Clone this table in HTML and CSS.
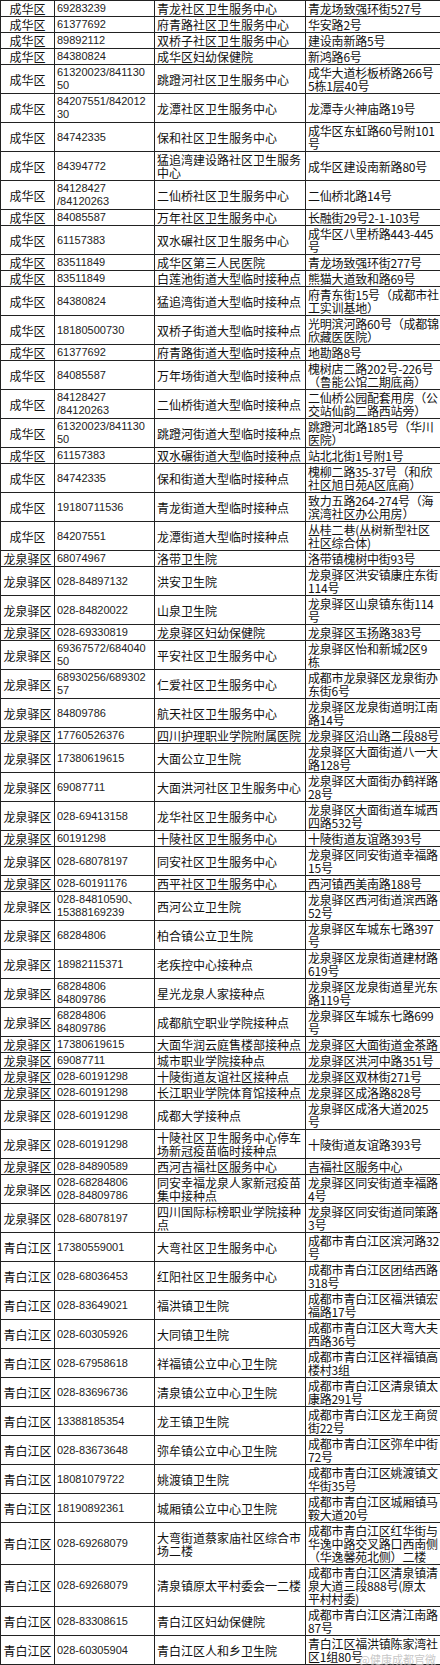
FILE: index.html
```html
<!DOCTYPE html>
<html lang="zh-CN">
<head>
<meta charset="utf-8">
<title>接种点</title>
<link rel="stylesheet" href="styles.css">
</head>
<body>
<div class="page">
<table class="sheet">
<colgroup><col class="c1"><col class="c2"><col class="c3"><col class="c4"></colgroup>
<tbody>
<tr><td class="d">成华区</td><td class="p">69283239</td><td class="n">青龙社区卫生服务中心</td><td class="a">青龙场致强环街527号</td></tr>
<tr><td class="d">成华区</td><td class="p">61377692</td><td class="n">府青路社区卫生服务中心</td><td class="a">华安路2号</td></tr>
<tr><td class="d">成华区</td><td class="p">89892112</td><td class="n">双桥子社区卫生服务中心</td><td class="a">建设南新路5号</td></tr>
<tr><td class="d">成华区</td><td class="p">84380824</td><td class="n">成华区妇幼保健院</td><td class="a">新鸿路6号</td></tr>
<tr><td class="d">成华区</td><td class="p">61320023/841130<br>50</td><td class="n">跳蹬河社区卫生服务中心</td><td class="a">成华大道杉板桥路266号<br>5栋1层40号</td></tr>
<tr><td class="d">成华区</td><td class="p">84207551/842012<br>30</td><td class="n">龙潭社区卫生服务中心</td><td class="a">龙潭寺火神庙路19号</td></tr>
<tr><td class="d">成华区</td><td class="p">84742335</td><td class="n">保和社区卫生服务中心</td><td class="a">成华区东虹路60号附101<br>号</td></tr>
<tr><td class="d">成华区</td><td class="p">84394772</td><td class="n">猛追湾建设路社区卫生服务<br>中心</td><td class="a">成华区建设南新路80号</td></tr>
<tr><td class="d">成华区</td><td class="p">84128427<br>/84120263</td><td class="n">二仙桥社区卫生服务中心</td><td class="a">二仙桥北路14号</td></tr>
<tr><td class="d">成华区</td><td class="p">84085587</td><td class="n">万年社区卫生服务中心</td><td class="a">长融街29号2-1-103号</td></tr>
<tr><td class="d">成华区</td><td class="p">61157383</td><td class="n">双水碾社区卫生服务中心</td><td class="a">成华区八里桥路443-445<br>号</td></tr>
<tr><td class="d">成华区</td><td class="p">83511849</td><td class="n">成华区第三人民医院</td><td class="a">青龙场致强环街277号</td></tr>
<tr><td class="d">成华区</td><td class="p">83511849</td><td class="n">白莲池街道大型临时接种点</td><td class="a">熊猫大道致和路69号</td></tr>
<tr><td class="d">成华区</td><td class="p">84380824</td><td class="n">猛追湾街道大型临时接种点</td><td class="a">府青东街15号（成都市社<br>工实训基地）</td></tr>
<tr><td class="d">成华区</td><td class="p">18180500730</td><td class="n">双桥子街道大型临时接种点</td><td class="a">光明滨河路60号（成都锦<br>欣藏医医院）</td></tr>
<tr><td class="d">成华区</td><td class="p">61377692</td><td class="n">府青路街道大型临时接种点</td><td class="a">地勘路8号</td></tr>
<tr><td class="d">成华区</td><td class="p">84085587</td><td class="n">万年场街道大型临时接种点</td><td class="a">槐树店二路202号-226号<br>（鲁能公馆二期底商）</td></tr>
<tr><td class="d">成华区</td><td class="p">84128427<br>/84120263</td><td class="n">二仙桥街道大型临时接种点</td><td class="a">二仙桥公园配套用房（公<br>交站仙韵二路西站旁）</td></tr>
<tr><td class="d">成华区</td><td class="p">61320023/841130<br>50</td><td class="n">跳蹬河街道大型临时接种点</td><td class="a">跳蹬河北路185号（华川<br>医院）</td></tr>
<tr><td class="d">成华区</td><td class="p">61157383</td><td class="n">双水碾街道大型临时接种点</td><td class="a">站北北街1号附1号</td></tr>
<tr><td class="d">成华区</td><td class="p">84742335</td><td class="n">保和街道大型临时接种点</td><td class="a">槐柳二路35-37号（和欣<br>社区旭日苑A区底商）</td></tr>
<tr><td class="d">成华区</td><td class="p">19180711536</td><td class="n">青龙街道大型临时接种点</td><td class="a">致力五路264-274号（海<br>滨湾社区办公用房）</td></tr>
<tr><td class="d">成华区</td><td class="p">84207551</td><td class="n">龙潭街道大型临时接种点</td><td class="a">丛桂二巷(丛树新型社区<br>社区综合体)</td></tr>
<tr><td class="d">龙泉驿区</td><td class="p">68074967</td><td class="n">洛带卫生院</td><td class="a">洛带镇槐树中街93号</td></tr>
<tr><td class="d">龙泉驿区</td><td class="p">028-84897132</td><td class="n">洪安卫生院</td><td class="a">龙泉驿区洪安镇康庄东街<br>114号</td></tr>
<tr><td class="d">龙泉驿区</td><td class="p">028-84820022</td><td class="n">山泉卫生院</td><td class="a">龙泉驿区山泉镇东街114<br>号</td></tr>
<tr><td class="d">龙泉驿区</td><td class="p">028-69330819</td><td class="n">龙泉驿区妇幼保健院</td><td class="a">龙泉驿区玉扬路383号</td></tr>
<tr><td class="d">龙泉驿区</td><td class="p">69367572/684040<br>50</td><td class="n">平安社区卫生服务中心</td><td class="a">龙泉驿区怡和新城2区9<br>栋</td></tr>
<tr><td class="d">龙泉驿区</td><td class="p">68930256/689302<br>57</td><td class="n">仁爱社区卫生服务中心</td><td class="a">成都市龙泉驿区龙泉街办<br>东街6号</td></tr>
<tr><td class="d">龙泉驿区</td><td class="p">84809786</td><td class="n">航天社区卫生服务中心</td><td class="a">龙泉驿区龙泉街道明江南<br>路14号</td></tr>
<tr><td class="d">龙泉驿区</td><td class="p">17760526376</td><td class="n">四川护理职业学院附属医院</td><td class="a">龙泉驿区沿山路二段88号</td></tr>
<tr><td class="d">龙泉驿区</td><td class="p">17380619615</td><td class="n">大面公立卫生院</td><td class="a">龙泉驿区大面街道八一大<br>路128号</td></tr>
<tr><td class="d">龙泉驿区</td><td class="p">69087711</td><td class="n">大面洪河社区卫生服务中心</td><td class="a">龙泉驿区大面街办鹤祥路<br>28号</td></tr>
<tr><td class="d">龙泉驿区</td><td class="p">028-69413158</td><td class="n">龙华社区卫生服务中心</td><td class="a">龙泉驿区大面街道车城西<br>四路532号</td></tr>
<tr><td class="d">龙泉驿区</td><td class="p">60191298</td><td class="n">十陵社区卫生服务中心</td><td class="a">十陵街道友谊路393号</td></tr>
<tr><td class="d">龙泉驿区</td><td class="p">028-68078197</td><td class="n">同安社区卫生服务中心</td><td class="a">龙泉驿区同安街道幸福路<br>15号</td></tr>
<tr><td class="d">龙泉驿区</td><td class="p">028-60191176</td><td class="n">西平社区卫生服务中心</td><td class="a">西河镇西美南路188号</td></tr>
<tr><td class="d">龙泉驿区</td><td class="p">028-84810590、<br>15388169239</td><td class="n">西河公立卫生院</td><td class="a">龙泉驿区西河街道滨西路<br>52号</td></tr>
<tr><td class="d">龙泉驿区</td><td class="p">68284806</td><td class="n">柏合镇公立卫生院</td><td class="a">龙泉驿区车城东七路397<br>号</td></tr>
<tr><td class="d">龙泉驿区</td><td class="p">18982115371</td><td class="n">老疾控中心接种点</td><td class="a">龙泉驿区龙泉街道建材路<br>619号</td></tr>
<tr><td class="d">龙泉驿区</td><td class="p">68284806<br>84809786</td><td class="n">星光龙泉人家接种点</td><td class="a">龙泉驿区龙泉街道星光东<br>路119号</td></tr>
<tr><td class="d">龙泉驿区</td><td class="p">68284806<br>84809786</td><td class="n">成都航空职业学院接种点</td><td class="a">龙泉驿区车城东七路699<br>号</td></tr>
<tr><td class="d">龙泉驿区</td><td class="p">17380619615</td><td class="n">大面华润云庭售楼部接种点</td><td class="a">龙泉驿区大面街道金茶路</td></tr>
<tr><td class="d">龙泉驿区</td><td class="p">69087711</td><td class="n">城市职业学院接种点</td><td class="a">龙泉驿区洪河中路351号</td></tr>
<tr><td class="d">龙泉驿区</td><td class="p">028-60191298</td><td class="n">十陵街道友谊社区接种点</td><td class="a">龙泉驿区双林街271号</td></tr>
<tr><td class="d">龙泉驿区</td><td class="p">028-60191298</td><td class="n">长江职业学院体育馆接种点</td><td class="a">龙泉驿区成洛路828号</td></tr>
<tr><td class="d">龙泉驿区</td><td class="p">028-60191298</td><td class="n">成都大学接种点</td><td class="a">龙泉驿区成洛大道2025<br>号</td></tr>
<tr><td class="d">龙泉驿区</td><td class="p">028-60191298</td><td class="n">十陵社区卫生服务中心停车<br>场新冠疫苗临时接种点</td><td class="a">十陵街道友谊路393号</td></tr>
<tr><td class="d">龙泉驿区</td><td class="p">028-84890589</td><td class="n">西河吉福社区服务中心</td><td class="a">吉福社区服务中心</td></tr>
<tr><td class="d">龙泉驿区</td><td class="p">028-68284806<br>028-84809786</td><td class="n">同安幸福龙泉人家新冠疫苗<br>集中接种点</td><td class="a">龙泉驿区同安街道幸福路<br>4号</td></tr>
<tr><td class="d">龙泉驿区</td><td class="p">028-68078197</td><td class="n">四川国际标榜职业学院接种<br>点</td><td class="a">龙泉驿区同安街道同策路<br>3号</td></tr>
<tr><td class="d">青白江区</td><td class="p">17380559001</td><td class="n">大弯社区卫生服务中心</td><td class="a">成都市青白江区滨河路32<br>号</td></tr>
<tr><td class="d">青白江区</td><td class="p">028-68036453</td><td class="n">红阳社区卫生服务中心</td><td class="a">成都市青白江区团结西路<br>318号</td></tr>
<tr><td class="d">青白江区</td><td class="p">028-83649021</td><td class="n">福洪镇卫生院</td><td class="a">成都市青白江区福洪镇宏<br>福路17号</td></tr>
<tr><td class="d">青白江区</td><td class="p">028-60305926</td><td class="n">大同镇卫生院</td><td class="a">成都市青白江区大弯大夫<br>西路36号</td></tr>
<tr><td class="d">青白江区</td><td class="p">028-67958618</td><td class="n">祥福镇公立中心卫生院</td><td class="a">成都市青白江区祥福镇高<br>楼村3组</td></tr>
<tr><td class="d">青白江区</td><td class="p">028-83696736</td><td class="n">清泉镇公立中心卫生院</td><td class="a">成都市青白江区清泉镇太<br>康路291号</td></tr>
<tr><td class="d">青白江区</td><td class="p">13388185354</td><td class="n">龙王镇卫生院</td><td class="a">成都市青白江区龙王商贸<br>街22号</td></tr>
<tr><td class="d">青白江区</td><td class="p">028-83673648</td><td class="n">弥牟镇公立中心卫生院</td><td class="a">成都市青白江区弥牟中街<br>72号</td></tr>
<tr><td class="d">青白江区</td><td class="p">18081079722</td><td class="n">姚渡镇卫生院</td><td class="a">成都市青白江区姚渡镇文<br>华街35号</td></tr>
<tr><td class="d">青白江区</td><td class="p">18190892361</td><td class="n">城厢镇公立中心卫生院</td><td class="a">成都市青白江区城厢镇马<br>鞍大道20号</td></tr>
<tr><td class="d">青白江区</td><td class="p">028-69268079</td><td class="n">大弯街道蔡家庙社区综合市<br>场二楼</td><td class="a">成都市青白江区红华街与<br>华逸中路交叉路口西南侧<br>（华逸馨苑北侧）二楼</td></tr>
<tr><td class="d">青白江区</td><td class="p">028-69268079</td><td class="n">清泉镇原太平村委会一二楼</td><td class="a">成都市青白江区清泉镇清<br>泉大道三段888号(原太<br>平村村委)</td></tr>
<tr><td class="d">青白江区</td><td class="p">028-83308615</td><td class="n">青白江区妇幼保健院</td><td class="a">成都市青白江区清江南路<br>87号</td></tr>
<tr><td class="d">青白江区</td><td class="p">028-60305904</td><td class="n">青白江区人和乡卫生院</td><td class="a">青白江区福洪镇陈家湾社<br>区1组80号</td></tr>
</tbody>
</table>
<div class="mark">@健康成都官微</div>
</div>
</body>
</html>
```
FILE: styles.css
```css
html, body {
  margin: 0;
  padding: 0;
  background: #fff;
  overflow-x: hidden;
}
.page {
  position: relative;
  width: 440px;
  overflow: hidden;
}
.sheet {
  border-collapse: collapse;
  table-layout: fixed;
  width: 456px;
  font-family: "Noto Sans CJK SC", sans-serif;
  font-size: 12px;
  line-height: 13px;
  color: #111;
}
.c1 { width: 54px; }
.c2 { width: 100px; }
.c3 { width: 151px; }
.c4 { width: 151px; }
.sheet td {
  border: 1px solid #222;
  padding: 1px 1px 1px 2px;
  vertical-align: middle;
  white-space: nowrap;
  text-align: left;
}
.sheet td.d {
  text-align: center;
  padding-left: 0;
  padding-right: 0;
}
.sheet td.p {
  font-family: "Liberation Sans", "Noto Sans CJK SC", sans-serif;
  font-size: 11px;
  color: #222;
}
.sheet td.a {
  letter-spacing: -0.2px;
}
.mark {
  position: absolute;
  right: 4px;
  bottom: 0;
  font-family: "Noto Sans CJK SC", sans-serif;
  font-size: 11px;
  line-height: 12px;
  color: rgba(160, 160, 160, 0.6);
  text-shadow: 0 0 1px rgba(255, 255, 255, 0.9);
  white-space: nowrap;
}
```
